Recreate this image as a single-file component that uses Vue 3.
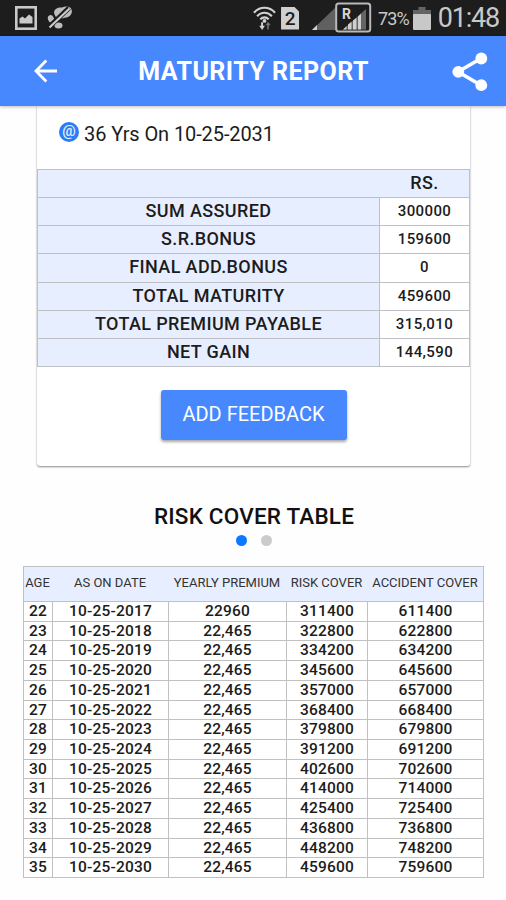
<template>
  <div class="screen">
    <!-- Status bar -->
    <div class="status-bar">
      <div class="status-left">
        <svg class="icon-image" width="22" height="24" viewBox="0 0 22 24">
          <rect x="1.3" y="1.3" width="19.4" height="21.4" fill="none" stroke="#c9c9c9" stroke-width="2.6" />
          <path d="M4.500 17.500v-5l3-2 2.500 2 4-4 3.500 2.500v6.500z" fill="#c9c9c9" />
        </svg>
        <svg class="icon-muted" width="26" height="24" viewBox="0 0 26 24">
          <path d="M7 7c0-5 5-6 8-5.500 4-2 9-1 9.500 2 1.500 4-2 8-6 8-4 1.500-8 1-10-1z" fill="#bdbdbd" />
          <ellipse cx="4" cy="13" rx="3" ry="4" fill="#bdbdbd" transform="rotate(-20 4 13)" />
          <ellipse cx="11.500" cy="19.500" rx="4" ry="3" fill="#bdbdbd" />
          <path d="M2 21L22 2" stroke="#1d1d1d" stroke-width="5" />
          <path d="M2.500 21.500L22.500 2.500" stroke="#cfcfcf" stroke-width="2" />
        </svg>
      </div>
      <div class="status-right">
        <svg class="icon-wifi" width="23" height="26" viewBox="0 0 24 26">
          <g fill="none" stroke="#d2d2d2" stroke-width="2.200">
            <path d="M1 7.500C7 .500 17 .500 23 7.500" />
            <path d="M4.300 11.200C8.500 6.300 15.500 6.300 19.700 11.200" />
            <path d="M7.600 14.500C10 11.700 14 11.700 16.400 14.500" />
          </g>
          <circle cx="12" cy="16" r="2" fill="#d2d2d2" />
          <path d="M6.500 21h2v-3.500h2V21h2l-3 4.500z" fill="#d2d2d2" />
          <path d="M13 20.500l2.700-3.500 2.800 3.500h-2V25h-1.600v-4.500z" fill="#777" />
        </svg>
        <div class="sim">2</div>
        <svg class="icon-signal" width="61" height="32" viewBox="0 0 61 32">
          <path d="M1 28L25 5v23z" fill="#606060" />
          <path d="M1 28l5-5v5z" fill="#d0d0d0" />
          <rect x="25.200" y="1.500" width="34" height="28" rx="2.500" fill="#1d1d1d" stroke="#b9b9b9" stroke-width="2" />
          <path d="M32 27.500L55 7v20.500z" fill="#646464" />
          <path d="M32 27.500l3.500-3.200v3.200zM37 27.500v-5l3.500-2.800v7.800zM42 27.500v-9l3.500-2.700v11.700zM47 27.500v-13l3-2.700v15.700z" fill="#cfcfcf" />
          <text x="31" y="17" class="roaming">R</text>
        </svg>
        <span class="percent">73%</span>
        <svg class="icon-battery" width="18" height="23" viewBox="0 0 18 23">
          <path d="M5.500 0h7v3H18v5H0V3h5.500z" fill="#646464" />
          <rect y="7" width="18" height="16" rx="1" fill="#c8c8c8" />
        </svg>
        <span class="clock">01:48</span>
      </div>
    </div>

    <!-- App header -->
    <header class="header">
      <svg class="back" width="24" height="24" viewBox="0 0 24 24">
        <path d="M12.300 1.500L2 12l10.300 10.500M2 12h21" fill="none" stroke="#fff" stroke-width="2.800" />
      </svg>
      <h1>MATURITY REPORT</h1>
      <svg class="share" width="36" height="40" viewBox="0 0 36 40">
        <path d="M29 6.500L6 19.800l23 13.400" fill="none" stroke="#fff" stroke-width="3.600" />
        <circle cx="29.300" cy="6.500" r="5.900" fill="#fff" />
        <circle cx="6.300" cy="19.800" r="5.900" fill="#fff" />
        <circle cx="29.300" cy="33.200" r="5.900" fill="#fff" />
      </svg>
    </header>

    <!-- Maturity card -->
    <section class="card">
      <div class="maturity-date">
        <span class="at">@</span>
        <span>36 Yrs On 10-25-2031</span>
      </div>

      <div class="summary">
        <div class="summary-head"><span>RS.</span></div>
        <div v-for="row in summary" :key="row.label" class="summary-row">
          <div class="label">{{ row.label }}</div>
          <div class="value">{{ row.value }}</div>
        </div>
      </div>

      <button class="feedback">ADD FEEDBACK</button>
    </section>

    <!-- Risk cover -->
    <h2>RISK COVER TABLE</h2>
    <div class="dots">
      <span class="dot active"></span>
      <span class="dot"></span>
    </div>

    <div class="risk">
      <div class="risk-row risk-head">
        <div v-for="c in columns" :key="c">{{ c }}</div>
      </div>
      <div v-for="row in riskRows" :key="row[0]" class="risk-row">
        <div v-for="(cell, i) in row" :key="i">{{ cell }}</div>
      </div>
    </div>
  </div>
</template>

<script setup>
const summary = [
  { label: "SUM ASSURED", value: "300000" },
  { label: "S.R.BONUS", value: "159600" },
  { label: "FINAL ADD.BONUS", value: "0" },
  { label: "TOTAL MATURITY", value: "459600" },
  { label: "TOTAL PREMIUM PAYABLE", value: "315,010" },
  { label: "NET GAIN", value: "144,590" },
];

const columns = ["AGE", "AS ON DATE", "YEARLY PREMIUM", "RISK COVER", "ACCIDENT COVER"];

const riskCover = [
  311400, 322800, 334200, 345600, 357000, 368400, 379800,
  391200, 402600, 414000, 425400, 436800, 448200, 459600,
];

// Accident cover = risk cover + sum assured
const riskRows = riskCover.map((cover, i) => [
  22 + i,
  `10-25-${2017 + i}`,
  i === 0 ? "22960" : "22,465",
  cover,
  cover + 300000,
]);
</script>

<style>
body {
  margin: 0;
  background: #fefefe;
}
</style>

<style scoped>
.screen {
  width: 506px;
  height: 900px;
  overflow: hidden;
  background: #fefefe;
  font-family: Roboto, sans-serif;
  color: #1c1c1c;
  display: flex;
  flex-direction: column;
}

.status-bar {
  height: 36px;
  flex: none;
  background: #1d1d1d;
  display: flex;
  justify-content: space-between;
  color: #c9c9c9;
}

.status-left {
  display: flex;
  align-items: center;
  gap: 10px;
  padding-left: 15px;
}

.status-right {
  display: flex;
  align-items: center;
  padding-right: 7px;
}

.sim {
  width: 18px;
  height: 23px;
  margin: 0 12px 0 5px;
  background: #d0d0d0;
  clip-path: polygon(0 0, 72% 0, 100% 22%, 100% 100%, 0 100%);
  color: #1d1d1d;
  font-size: 19px;
  line-height: 24px;
  font-weight: 500;
  text-align: center;
}

.roaming {
  font-size: 14px;
  font-weight: 700;
  fill: #d6d6d6;
}

.percent {
  font-size: 18px;
  letter-spacing: -0.9px;
  margin: 1px 4px 0 6px;
}

.clock {
  font-size: 27px;
  letter-spacing: -1.2px;
  margin-left: 7px;
}

.header {
  height: 70px;
  flex: none;
  box-sizing: border-box;
  background: #4788ff;
  display: flex;
  align-items: center;
  justify-content: space-between;
  padding: 0 18px 0 34px;
  color: #fff;
  box-shadow: 0 1px 3px rgba(0, 0, 0, 0.25);
  z-index: 1;
}

.header h1 {
  margin: 0 3px 0 0;
  font-size: 25px;
  font-weight: 700;
  letter-spacing: 0.45px;
}

.share {
  margin-top: 2px;
}

.card {
  width: 433px;
  height: 360px;
  flex: none;
  margin-left: 37px;
  background: #fff;
  border-radius: 0 0 3px 3px;
  box-shadow: 0 1px 2px rgba(0, 0, 0, 0.45);
  display: flex;
  flex-direction: column;
  align-items: center;
}

.maturity-date {
  align-self: stretch;
  height: 63px;
  box-sizing: border-box;
  padding: 16px 0 0 22px;
  display: flex;
  align-items: flex-start;
  gap: 5px;
  font-size: 20px;
  letter-spacing: -0.1px;
  line-height: 24px;
}

.at {
  width: 20px;
  height: 20px;
  border-radius: 50%;
  background: #2b7df3;
  color: #e4efff;
  font-size: 15px;
  font-weight: 500;
  letter-spacing: 0;
  line-height: 18px;
  text-align: center;
}

.summary {
  width: 433px;
  height: 198px;
  box-sizing: border-box;
  border: 1px solid #bfc0c4;
  border-bottom: none;
  display: grid;
  grid-template-rows: repeat(7, 1fr);
  text-align: center;
  font-weight: 500;
}

.summary-head,
.summary-row {
  display: grid;
  grid-template-columns: 342px 1fr;
  border-bottom: 1px solid #bfc0c4;
  line-height: 26px;
  font-size: 18px;
  letter-spacing: 0.38px;
}

.summary-head {
  background: #e7eeff;
}

.summary-head span {
  grid-column: 2;
}

.label {
  background: #e7eeff;
  border-right: 1px solid #bfc0c4;
}

.value {
  font-size: 15px;
  letter-spacing: 0.4px;
}

.feedback {
  width: 186px;
  height: 50px;
  margin-top: 23px;
  border: none;
  border-radius: 3px;
  background: #4788ff;
  color: #fff;
  font-family: inherit;
  font-size: 20px;
  padding: 0 0 3px;
  box-shadow: 0 2px 3px rgba(0, 0, 0, 0.35);
}

h2 {
  margin: 36px 0 0;
  padding-left: 2px;
  font-size: 22.5px;
  line-height: 28px;
  font-weight: 500;
  letter-spacing: 0.2px;
  text-align: center;
  color: #111;
}

.dots {
  display: flex;
  justify-content: center;
  gap: 14px;
  margin-top: 5px;
  padding-left: 1px;
}

.dot {
  width: 11px;
  height: 11px;
  border-radius: 50%;
  background: #cbcbcb;
}

.dot.active {
  background: #0a78ff;
}

.risk {
  width: 461px;
  height: 312px;
  box-sizing: border-box;
  flex: none;
  margin: 20px 0 0 23px;
  border: 1px solid #bfc0c4;
  border-bottom: none;
  background: #fff;
  display: grid;
  grid-template-rows: 35px repeat(14, 1fr);
}

.risk-row {
  display: grid;
  grid-template-columns: 28px 116px 118px 81px 1fr;
  border-bottom: 1px solid #c1c1c1;
  font-size: 15.5px;
  line-height: 18.6px;
  font-weight: 500;
  letter-spacing: 0.2px;
  text-align: center;
}

.risk-row div + div {
  border-left: 1px solid #c1c1c1;
}

.risk-head {
  background: #e7eeff;
  font-size: 13px;
  line-height: 32px;
  font-weight: 400;
  letter-spacing: 0;
  color: #333;
  white-space: nowrap;
}

.risk-head div {
  margin-left: -1px;
}

.risk-head div + div {
  border-left-color: transparent;
}
</style>
